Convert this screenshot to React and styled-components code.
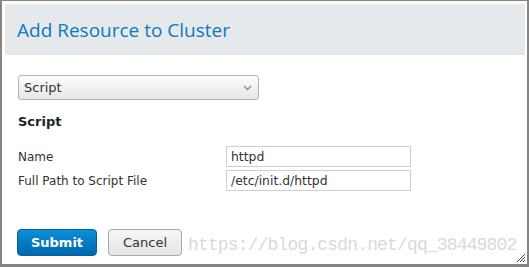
import styled, { createGlobalStyle } from 'styled-components';

const GlobalStyle = createGlobalStyle`
  html, body {
    margin: 0;
    padding: 0;
    background: #ffffff;
  }
`;

const Window = styled.div`
  position: relative;
  box-sizing: border-box;
  width: 529px;
  height: 267px;
  border-style: solid;
  border-color: #858585;
  border-width: 1px 2px 3px 2px;
  padding: 3px 2px 0 3px;
  background: #ffffff;
  font-family: 'DejaVu Sans', sans-serif;
  color: #222;
  overflow: hidden;
`;

const Header = styled.div`
  height: 51px;
  background: #e5e9ec;
  display: flex;
  align-items: center;
  padding-left: 12px;
`;

const Title = styled.h1`
  margin: 0;
  font-family: 'Open Sans', sans-serif;
  font-weight: 400;
  font-size: 19px;
  color: #0b7ac0;
`;

const Body = styled.div`
  padding: 20px 0 0 13px;
  display: flex;
  flex-direction: column;
`;

const SelectBox = styled.div`
  box-sizing: border-box;
  width: 241px;
  height: 25px;
  border: 1px solid #b4b4b4;
  border-radius: 3px;
  background: linear-gradient(#fdfdfd, #e6e6e6);
  display: flex;
  align-items: center;
  justify-content: space-between;
  padding: 0 6px 0 5px;
  font-size: 13px;
  color: #333;
`;

const Heading = styled.h2`
  margin: 14px 0 0;
  font-size: 13px;
  line-height: 16px;
  font-weight: 700;
  color: #222;
`;

const Fields = styled.div`
  margin-top: 16px;
  display: grid;
  grid-template-columns: 208px 185px;
  row-gap: 3px;
  align-items: center;
`;

const Label = styled.label`
  font-size: 12px;
  color: #333;
`;

const TextInput = styled.div`
  box-sizing: border-box;
  height: 21px;
  border: 1px solid #cfcfcf;
  padding: 0 4px;
  display: flex;
  align-items: center;
  font-size: 12.4px;
  color: #333;
`;

const Buttons = styled.div`
  margin-top: 38px;
  padding-left: 12px;
  display: flex;
  gap: 11px;
`;

const Button = styled.button`
  box-sizing: border-box;
  height: 27px;
  width: ${(p) => p.$w}px;
  border-radius: 4px;
  font-family: 'DejaVu Sans', sans-serif;
  font-size: 13px;
  padding: 0;
  cursor: pointer;
  border: 1px solid ${(p) => (p.$primary ? '#04609e' : '#a8a8a8')};
  background: ${(p) =>
    p.$primary ? 'linear-gradient(#0d8ed8, #0068ad)' : 'linear-gradient(#f7f7f8, #e2e4e6)'};
  color: ${(p) => (p.$primary ? '#ffffff' : '#333')};
  font-weight: ${(p) => (p.$primary ? 700 : 400)};
`;

const Watermark = styled.div`
  position: absolute;
  left: 186px;
  top: 234px;
  font-family: 'Liberation Mono', monospace;
  font-size: 18px;
  letter-spacing: -0.85px;
  color: #dadad2;
  white-space: nowrap;
  pointer-events: none;
`;

const Grip = styled.svg`
  position: absolute;
  right: 1px;
  bottom: 1px;
`;

function Chevron() {
  return (
    <svg width="9" height="6" viewBox="0 0 9 6">
      <path d="M1 1 L4.5 4.5 L8 1" fill="none" stroke="#8a8a8a" strokeWidth="1.4" />
    </svg>
  );
}

export default function App() {
  return (
    <>
      <GlobalStyle />
      <Window>
        <Header>
          <Title>Add Resource to Cluster</Title>
        </Header>
        <Body>
          <SelectBox>
            <span>Script</span>
            <Chevron />
          </SelectBox>
          <Heading>Script</Heading>
          <Fields>
            <Label>Name</Label>
            <TextInput>httpd</TextInput>
            <Label>Full Path to Script File</Label>
            <TextInput>/etc/init.d/httpd</TextInput>
          </Fields>
        </Body>
        <Buttons>
          <Button $primary $w={80}>Submit</Button>
          <Button $w={74}>Cancel</Button>
        </Buttons>
        <Watermark>https://blog.csdn.net/qq_38449802</Watermark>
        <Grip width="12" height="12" viewBox="0 0 12 12">
          <path d="M11 3 L3 11 M11 6 L6 11 M11 9 L9 11" stroke="#444" strokeWidth="1" />
        </Grip>
      </Window>
    </>
  );
}
